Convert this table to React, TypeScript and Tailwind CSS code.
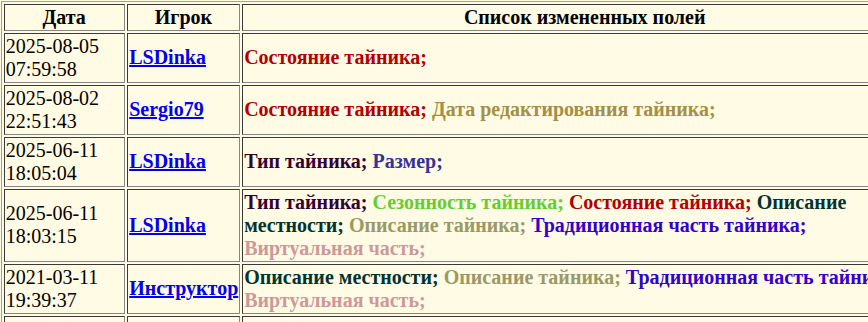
import React from 'react';

type Field = { text: string; color: string };

const F = {
  state: { text: 'Состояние тайника;', color: 'text-[#b00000]' },
  editDate: { text: 'Дата редактирования тайника;', color: 'text-[#a38f45]' },
  type: { text: 'Тип тайника;', color: 'text-[#330033]' },
  size: { text: 'Размер;', color: 'text-[#333399]' },
  season: { text: 'Сезонность тайника;', color: 'text-[#66cc33]' },
  area: { text: 'Описание местности;', color: 'text-[#003333]' },
  descr: { text: 'Описание тайника;', color: 'text-[#999966]' },
  trad: { text: 'Традиционная часть тайника;', color: 'text-[#3300cc]' },
  virt: { text: 'Виртуальная часть;', color: 'text-[#cc9999]' },
};

const ROWS: { date: string; time: string; user: string; fields: Field[] }[] = [
  { date: '2025-08-05', time: '07:59:58', user: 'LSDinka', fields: [F.state] },
  { date: '2025-08-02', time: '22:51:43', user: 'Sergio79', fields: [F.state, F.editDate] },
  { date: '2025-06-11', time: '18:05:04', user: 'LSDinka', fields: [F.type, F.size] },
  { date: '2025-06-11', time: '18:03:15', user: 'LSDinka', fields: [F.type, F.season, F.state, F.area, F.descr, F.trad, F.virt] },
  { date: '2021-03-11', time: '19:39:37', user: 'Инструктор', fields: [F.area, F.descr, F.trad, F.virt] },
  { date: '2021-03-10', time: '12:14:02', user: 'Инструктор', fields: [F.type, F.size] },
];

// inset-looking cell border: dark top/left, grey bottom/right
const cell =
  'px-[1.25px] py-px align-middle border border-t-[#3a3a3a] border-l-[#3a3a3a] border-b-[#858585] border-r-[#858585]';

export default function App() {
  return (
    <div className="min-h-screen bg-[#fffbe4] pt-[0.5px] pl-[0.5px] font-['Liberation_Serif','Times_New_Roman',serif] text-[20px] leading-[23px] text-black">
      <table className="w-[930px] table-fixed border-separate border-spacing-[2.5px] border border-t-[#a0a0a0] border-l-[#a0a0a0] border-b-[#404040] border-r-[#404040] bg-[#fffbe4]">
        <thead>
          <tr>
            <th className={`${cell} w-[121px] font-bold text-center`}>Дата</th>
            <th className={`${cell} w-[112.5px] font-bold text-center`}>Игрок</th>
            <th className={`${cell} w-[683px] font-bold text-center`}>Список измененных полей</th>
          </tr>
        </thead>
        <tbody>
          {ROWS.map((r, i) => (
            <tr key={i}>
              <td className={`${cell} text-left`}>
                {r.date}
                <br />
                {r.time}
              </td>
              <td className={`${cell} text-left`}>
                <a href="#" className="font-bold text-[#0000ee] underline">
                  {r.user}
                </a>
              </td>
              <td className={`${cell} text-left font-bold`}>
                {r.fields.map((f, j) => (
                  <React.Fragment key={j}>
                    <span className={f.color}>{f.text}</span>
                    {j < r.fields.length - 1 ? ' ' : ''}
                  </React.Fragment>
                ))}
              </td>
            </tr>
          ))}
        </tbody>
      </table>
    </div>
  );
}
